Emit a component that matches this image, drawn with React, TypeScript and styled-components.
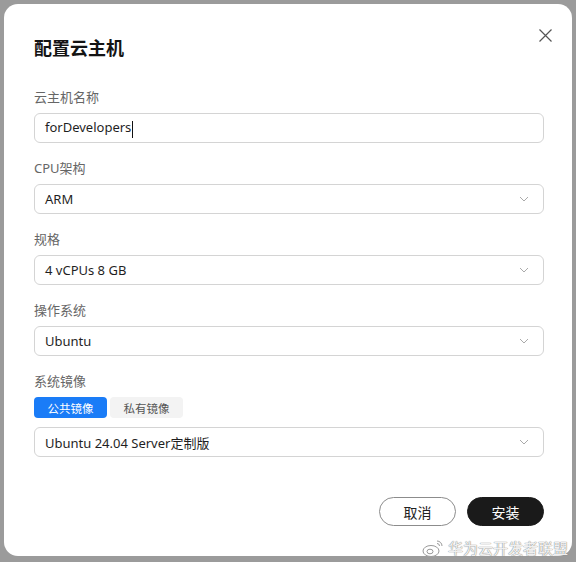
import styled, { createGlobalStyle } from "styled-components"

const GlobalStyle = createGlobalStyle`
    html, body {
        margin: 0;
        padding: 0;
        background: #9b9b9b;
        font-family: "Noto Sans", "Noto Sans CJK SC", sans-serif;
    }
`

const Backdrop = styled.div`
    width: 576px;
    height: 562px;
    padding: 4px 0 0 4px;
    box-sizing: border-box;
    background: #9b9b9b;
    overflow: hidden;
`
const Dialog = styled.div`
    position: relative;
    width: 568px;
    height: 552px;
    box-sizing: border-box;
    padding: 30px 28px 0 30px;
    background: #fff;
    border-radius: 14px;
    display: flex;
    flex-direction: column;
`
const Title = styled.h2`
    margin: 0 0 25px;
    font-size: 18px;
    line-height: 28px;
    font-weight: 700;
    color: #141414;
`
const CloseButton = styled.button`
    position: absolute;
    top: 20px;
    right: 16px;
    width: 22px;
    height: 22px;
    padding: 0;
    border: none;
    background: none;
    display: flex;
    align-items: center;
    justify-content: center;
`
const Field = styled.div`
    display: flex;
    flex-direction: column;
    margin-bottom: 15px;
`
const Label = styled.div`
    font-size: 13px;
    line-height: 20px;
    color: #666;
    margin-bottom: 6px;
`
const Box = styled.div`
    height: 30px;
    box-sizing: border-box;
    border: 1px solid #d4d4d4;
    border-radius: 6px;
    padding: 0 14px 0 10px;
    display: flex;
    align-items: center;
    justify-content: space-between;
    font-size: 13px;
    color: #1f1f1f;
`
const Caret = styled.span`
    display: inline-block;
    width: 1px;
    height: 17px;
    background: #111;
    margin-left: 1px;
    vertical-align: middle;
`
const Tabs = styled.div`
    display: flex;
    gap: 3px;
    margin-bottom: 9px;
`
const Tab = styled.div<{ $active?: boolean }>`
    width: 73px;
    height: 21px;
    border-radius: 4px;
    display: flex;
    align-items: center;
    justify-content: center;
    font-size: 11.5px;
    background: ${p => (p.$active ? "#1a7cf7" : "#f3f3f3")};
    color: ${p => (p.$active ? "#fff" : "#555")};
`
const Footer = styled.div`
    display: flex;
    justify-content: flex-end;
    gap: 11px;
    margin-top: 25px;
`
const Button = styled.button<{ $primary?: boolean }>`
    width: 77px;
    height: 29px;
    border-radius: 15px;
    box-sizing: border-box;
    font-family: inherit;
    font-size: 14px;
    border: 1px solid ${p => (p.$primary ? "#1a1a1a" : "#8c8c8c")};
    background: ${p => (p.$primary ? "#1a1a1a" : "#fff")};
    color: ${p => (p.$primary ? "#fff" : "#222")};
`
const Watermark = styled.div`
    position: absolute;
    right: 4px;
    bottom: -2px;
    display: flex;
    align-items: center;
    gap: 4px;
    font-size: 15px;
    color: rgba(255, 255, 255, 0.9);
    text-shadow: 0 0 1px #888, 0 0 1px #888;
`

const Chevron = () => (
    <svg width="10" height="6" viewBox="0 0 10 6">
        <path d="M1 1 L5 5 L9 1" fill="none" stroke="#aaa" strokeWidth="1" />
    </svg>
)

const Select = ({ value }: { value: string }) => (
    <Box>
        <span>{value}</span>
        <Chevron />
    </Box>
)

const fields = [
    { label: "CPU架构", value: "ARM" },
    { label: "规格", value: "4 vCPUs 8 GB" },
    { label: "操作系统", value: "Ubuntu" },
]

const App: React.FC = () => {
    return (
        <>
            <GlobalStyle />
            <Backdrop>
                <Dialog>
                    <Title>配置云主机</Title>
                    <CloseButton>
                        <svg width="13" height="13" viewBox="0 0 13 13">
                            <path d="M0.5 0.5 L12.5 12.5 M12.5 0.5 L0.5 12.5" stroke="#555" strokeWidth="1.2" />
                        </svg>
                    </CloseButton>
                    <Field>
                        <Label>云主机名称</Label>
                        <Box>
                            <span>forDevelopers<Caret /></span>
                        </Box>
                    </Field>
                    {fields.map(f => (
                        <Field key={f.label}>
                            <Label>{f.label}</Label>
                            <Select value={f.value} />
                        </Field>
                    ))}
                    <Field>
                        <Label>系统镜像</Label>
                        <Tabs>
                            <Tab $active>公共镜像</Tab>
                            <Tab>私有镜像</Tab>
                        </Tabs>
                        <Select value="Ubuntu 24.04 Server定制版" />
                    </Field>
                    <Footer>
                        <Button>取消</Button>
                        <Button $primary>安装</Button>
                    </Footer>
                    <Watermark>
                        <svg width="22" height="18" viewBox="0 0 22 18">
                            <ellipse cx="9" cy="12" rx="8" ry="5.5" fill="rgba(255,255,255,0.9)" stroke="#999" strokeWidth="1" />
                            <ellipse cx="8" cy="12.5" rx="3" ry="2.3" fill="none" stroke="#999" strokeWidth="1" />
                            <path d="M15 2 A5 5 0 0 1 20 7 M15 4.5 A2.5 2.5 0 0 1 17.5 7" fill="none" stroke="#999" strokeWidth="1" />
                        </svg>
                        <span>华为云开发者联盟</span>
                    </Watermark>
                </Dialog>
            </Backdrop>
        </>
    )
}

export default App
